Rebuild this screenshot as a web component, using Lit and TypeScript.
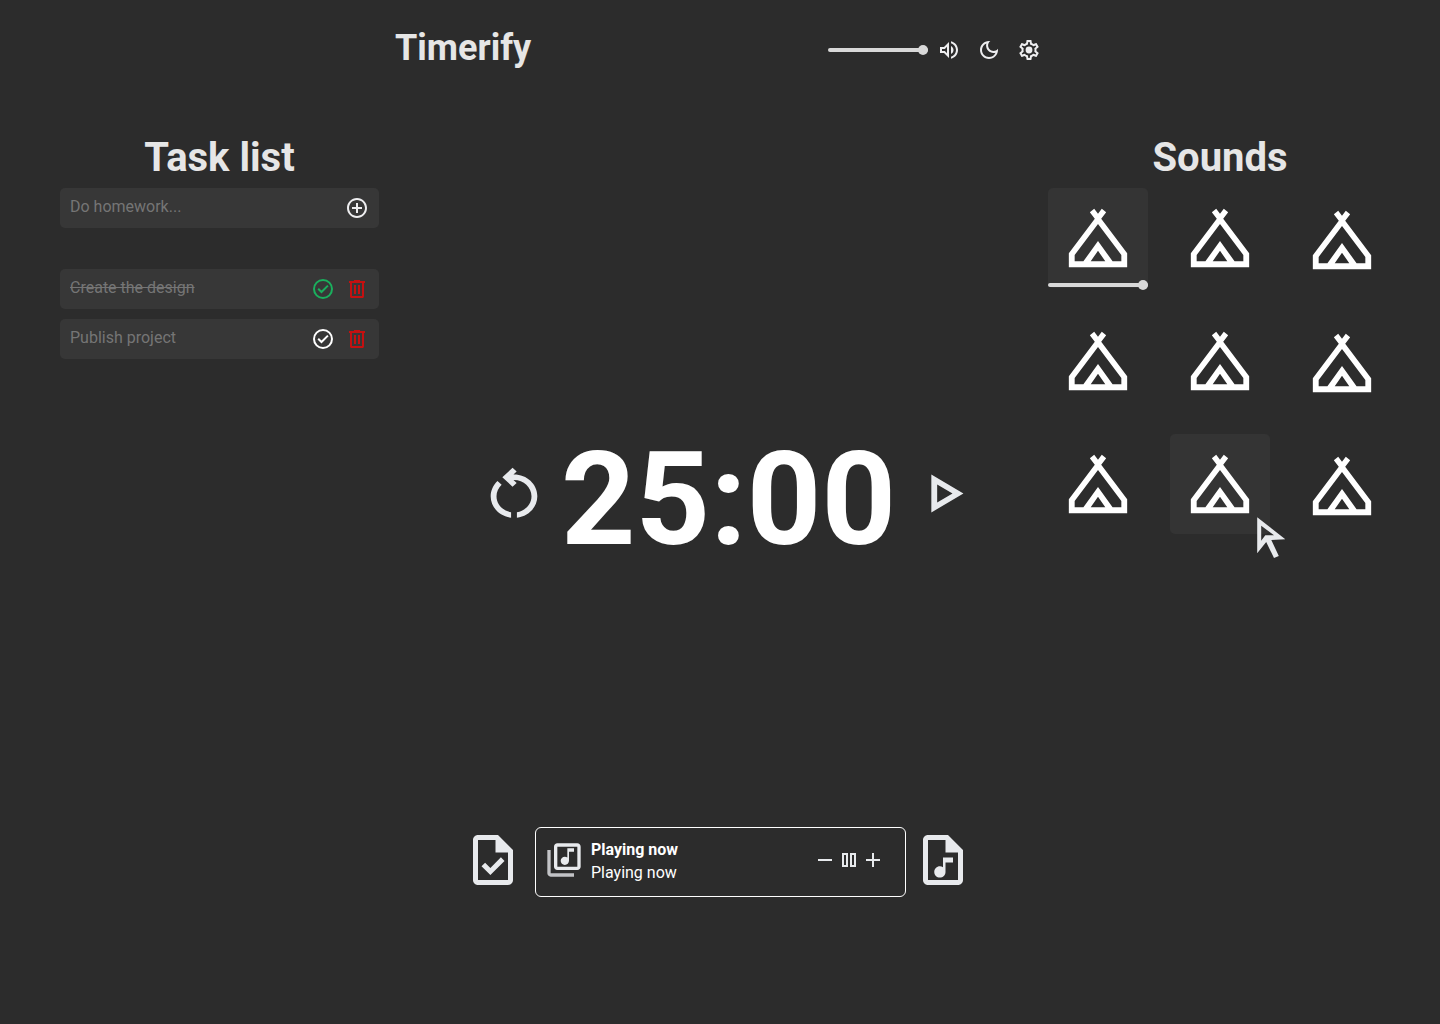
import { LitElement, html, svg, css } from "lit";
import { customElement, property, state } from "lit/decorators.js";
import { classMap } from "lit/directives/class-map.js";

const ICONS = {
  volume: svg`<path d="M3 9v6h4l5 5V4L7 9H3zm7-.17v6.34L7.83 13H5v-2h2.83L10 8.83zM16.5 12c0-1.77-1.02-3.29-2.5-4.03v8.05c1.48-.73 2.5-2.25 2.5-4.02zM14 3.23v2.06c2.89.86 5 3.54 5 6.71s-2.11 5.85-5 6.71v2.06c4.01-.91 7-4.49 7-8.77s-2.99-7.86-7-8.77z"/>`,
  moon: svg`<path d="M9.37 5.51C9.19 6.15 9.1 6.82 9.1 7.5c0 4.08 3.32 7.4 7.4 7.4.68 0 1.35-.09 1.99-.27C17.45 17.19 14.93 19 12 19c-3.86 0-7-3.14-7-7 0-2.93 1.81-5.45 4.37-6.49zM12 3c-4.97 0-9 4.03-9 9s4.03 9 9 9 9-4.03 9-9c0-.46-.04-.92-.1-1.36-.98 1.37-2.58 2.26-4.4 2.26-2.98 0-5.4-2.42-5.4-5.4 0-1.81.89-3.42 2.26-4.4C12.92 3.04 12.46 3 12 3z"/>`,
  settings: svg`<path d="M19.43 12.98c.04-.32.07-.64.07-.98 0-.34-.03-.66-.07-.98l2.11-1.65c.19-.15.24-.42.12-.64l-2-3.46c-.09-.16-.26-.25-.44-.25-.06 0-.12.01-.17.03l-2.49 1c-.52-.4-1.08-.73-1.69-.98l-.38-2.65C14.46 2.18 14.25 2 14 2h-4c-.25 0-.46.18-.49.42l-.38 2.65c-.61.25-1.17.59-1.69.98l-2.49-1c-.06-.02-.12-.03-.18-.03-.17 0-.34.09-.43.25l-2 3.46c-.13.22-.07.49.12.64l2.11 1.65c-.04.32-.07.65-.07.98 0 .33.03.66.07.98l-2.11 1.65c-.19.15-.24.42-.12.64l2 3.46c.09.16.26.25.44.25.06 0 .12-.01.17-.03l2.49-1c.52.4 1.08.73 1.69.98l.38 2.65c.03.24.24.42.49.42h4c.25 0 .46-.18.49-.42l.38-2.65c.61-.25 1.17-.59 1.69-.98l2.49 1c.06.02.12.03.18.03.17 0 .34-.09.43-.25l2-3.46c.12-.22.07-.49-.12-.64l-2.11-1.65zm-1.98-1.71c.04.31.05.52.05.73 0 .21-.02.43-.05.73l-.14 1.13.89.7 1.08.84-.7 1.21-1.27-.51-1.04-.42-.9.68c-.43.32-.84.56-1.25.73l-1.06.43-.16 1.13-.2 1.35h-1.4l-.19-1.35-.16-1.13-1.06-.43c-.43-.18-.83-.41-1.23-.71l-.91-.7-1.06.43-1.27.51-.7-1.21 1.08-.84.89-.7-.14-1.13c-.03-.31-.05-.54-.05-.74s.02-.43.05-.73l.14-1.13-.89-.7-1.08-.84.7-1.21 1.27.51 1.04.42.9-.68c.43-.32.84-.56 1.25-.73l1.06-.43.16-1.13.2-1.35h1.39l.19 1.35.16 1.13 1.06.43c.43.18.83.41 1.23.71l.91.7 1.06-.43 1.27-.51.7 1.21-1.07.85-.89.7.14 1.13z"/><circle cx="12" cy="12" r="3.4"/>`,
  addCircle: svg`<path d="M13 7h-2v4H7v2h4v4h2v-4h4v-2h-4V7zm-1-5C6.48 2 2 6.48 2 12s4.48 10 10 10 10-4.48 10-10S17.52 2 12 2zm0 18c-4.41 0-8-3.59-8-8s3.59-8 8-8 8 3.59 8 8-3.59 8-8 8z"/>`,
  checkCircle: svg`<g fill="none" stroke="currentColor" stroke-width="2"><circle cx="12" cy="12" r="9"/><path d="M7.2 11.8l3.3 3.2 6.4-6.4"/></g>`,
  trash: svg`<path fill-rule="evenodd" d="M9 3h6v1h5v2h-1v13.500c0 .8-.7 1.500-1.500 1.500h-11C5.700 21 5 20.300 5 19.500V6H4V4h5V3zM7 6v13h10V6H7zm2 2h2v9H9V8zm4 0h2v9h-2V8z"/>`,
  tent: svg`<path fill-rule="evenodd" d="M2 22v-4.800L10.900 5.400 9.200 3.200l1.500-1.200L12 3.700l1.300-1.700 1.500 1.200-1.700 2.200L22 17.200V22H2zM4 20h3l5-7 5 7h3v-2.200L12 7.200 4 17.800V20zm5.500 0h5L12 16.350 9.500 20z"/>`,
  restart: svg`<path d="M6 13c0-1.650.67-3.150 1.760-4.240L6.340 7.340C4.900 8.790 4 10.790 4 13c0 4.080 3.050 7.440 7 7.930v-2.020c-2.830-.48-5-2.940-5-5.910zm14 0c0-4.420-3.580-8-8-8-.06 0-.12.01-.18.01l1.090-1.090L11.500 2.500 8 6l3.500 3.500 1.410-1.410-1.080-1.080c.06 0 .12-.01.17-.01 3.310 0 6 2.690 6 6 0 2.970-2.170 5.430-5 5.910v2.020c3.950-.49 7-3.850 7-7.930z"/>`,
  play: svg`<path d="M10 8.640L15.270 12 10 15.360V8.640M8 5v14l11-7L8 5z"/>`,
  taskFile: svg`<path fill-rule="evenodd" d="M6 2h8l6 6v12c0 1.100-.9 2-2 2H6c-1.100 0-2-.9-2-2V4c0-1.100.9-2 2-2zm0 2v16h12V9h-5V4H6z"/><path d="M10.950 18l5.650-5.650-1.430-1.430-4.220 4.230-2.100-2.100-1.450 1.420L10.950 18z"/>`,
  audioFile: svg`<path fill-rule="evenodd" d="M6 2h8l6 6v12c0 1.100-.9 2-2 2H6c-1.100 0-2-.9-2-2V4c0-1.100.9-2 2-2zm0 2v16h12V9h-5V4H6z"/><path d="M16 11h-4v3.880c-.36-.24-.79-.38-1.250-.38-1.240 0-2.250 1.010-2.250 2.250S9.510 19 10.750 19 13 17.990 13 16.750V13h3v-2z"/>`,
  library: svg`<path d="M20 2H8c-1.100 0-2 .9-2 2v12c0 1.100.9 2 2 2h12c1.100 0 2-.9 2-2V4c0-1.100-.9-2-2-2zm0 14H8V4h12v12zm-7.500-1c1.380 0 2.500-1.120 2.500-2.500V7h3V5h-4v5.510c-.42-.32-.93-.51-1.500-.51-1.380 0-2.500 1.120-2.500 2.500s1.120 2.500 2.500 2.500z"/><path opacity=".8" d="M4 6H2v14c0 1.100.9 2 2 2h14v-2H4V6z"/>`,
  minus: svg`<path d="M5 11h14v2H5z"/>`,
  pause: svg`<path fill-rule="evenodd" d="M5 5h6v14H5V5zm2 2v10h2V7H7zm6-2h6v14h-6V5zm2 2v10h2V7h-2z"/>`,
  plus: svg`<path d="M11 5h2v6h6v2h-6v6h-2v-6H5v-2h6V5z"/>`,
};

const icon = (name: keyof typeof ICONS) =>
  html`<svg viewBox="0 0 24 24" preserveAspectRatio="none" fill="currentColor" aria-hidden="true">${ICONS[name]}</svg>`;

const base = css`
  *,
  *::before,
  *::after {
    box-sizing: border-box;
  }
  button {
    display: grid;
    place-items: center;
    margin: 0;
    padding: 0;
    border: 0;
    background: none;
    color: inherit;
    font: inherit;
    cursor: pointer;
  }
  svg {
    display: block;
    width: 24px;
    height: 24px;
  }
  h1,
  h2,
  p,
  ul {
    margin: 0;
    padding: 0;
    list-style: none;
  }
`;

@customElement("volume-slider")
class VolumeSlider extends LitElement {
  @property() label = "";

  static styles = [
    base,
    css`
      :host {
        display: block;
        width: 100px;
      }
      .range {
        display: block;
        appearance: none;
        width: 100%;
        height: 10px;
        margin: 0;
        background: none;
      }
      .range::-webkit-slider-runnable-track {
        height: 4px;
        border-radius: 2px;
        background: #d9d9d9;
      }
      .range::-webkit-slider-thumb {
        appearance: none;
        width: 10px;
        height: 10px;
        margin-top: -3px;
        border-radius: 50%;
        background: #d9d9d9;
      }
    `,
  ];

  render() {
    return html`<input class="range" type="range" min="0" max="100" value="100" aria-label=${this.label} />`;
  }
}

interface Task {
  title: string;
  done: boolean;
}

@customElement("task-list")
class TaskList extends LitElement {
  @state() tasks: Task[] = [
    { title: "Create the design", done: true },
    { title: "Publish project", done: false },
  ];

  static styles = [
    base,
    css`
      :host {
        display: block;
      }
      .heading {
        font-size: 40px;
        line-height: 52px;
        text-align: center;
        color: #e6e6e6;
      }
      .row {
        display: flex;
        align-items: center;
        gap: 10px;
        height: 40px;
        padding: 0 10px;
        border-radius: 5px;
        background: #373737;
      }
      .new {
        margin: 4px 0 41px;
        color: #eeeef0;
      }
      .text {
        flex: 1;
        min-width: 0;
        padding: 0 0 2px;
        border: 0;
        outline: 0;
        background: none;
        color: #757575;
        font: inherit;
        font-size: 16px;
        line-height: 24px;
      }
      .text::placeholder {
        color: #757575;
        opacity: 1;
      }
      .done {
        text-decoration: line-through;
      }
      .items {
        display: grid;
        gap: 10px;
      }
      .check {
        color: #ffffff;
      }
      .checked {
        color: #1aaf5d;
      }
      .remove {
        color: #c41010;
      }
    `,
  ];

  private add(event: Event) {
    event.preventDefault();
    const input = this.renderRoot.querySelector("input")!;
    const title = input.value.trim();
    if (!title) return;
    this.tasks = [...this.tasks, { title, done: false }];
    input.value = "";
  }

  private toggle(task: Task) {
    this.tasks = this.tasks.map((t) => (t === task ? { ...t, done: !t.done } : t));
  }

  private remove(task: Task) {
    this.tasks = this.tasks.filter((t) => t !== task);
  }

  render() {
    return html`
      <h2 class="heading">Task list</h2>
      <form class="row new" @submit=${this.add}>
        <input class="text" type="text" placeholder="Do homework..." aria-label="New task" />
        <button type="submit" aria-label="Add task">${icon("addCircle")}</button>
      </form>
      <ul class="items">
        ${this.tasks.map(
          (task) => html`
            <li class="row">
              <span class=${classMap({ text: true, done: task.done })}>${task.title}</span>
              <button
                class=${classMap({ check: true, checked: task.done })}
                aria-label="Complete task"
                aria-pressed=${task.done}
                @click=${() => this.toggle(task)}
              >
                ${icon("checkCircle")}
              </button>
              <button class="remove" aria-label="Delete task" @click=${() => this.remove(task)}>${icon("trash")}</button>
            </li>
          `
        )}
      </ul>
    `;
  }
}

@customElement("sound-board")
class SoundBoard extends LitElement {
  @state() playing = 0;
  @state() hovered = 7;

  static styles = [
    base,
    css`
      :host {
        display: block;
      }
      .heading {
        margin-bottom: 4px;
        font-size: 40px;
        line-height: 52px;
        text-align: center;
        color: #e6e6e6;
      }
      .grid {
        display: grid;
        grid-template-columns: repeat(3, 100px);
        justify-content: space-between;
        row-gap: 23px;
      }
      .cell {
        position: relative;
        height: 100px;
        border-radius: 5px;
      }
      .active {
        background: #343434;
      }
      .sound {
        width: 100%;
        height: 100%;
        color: #ffffff;
      }
      .cell:nth-child(3n) .sound {
        padding-top: 4px;
      }
      .sound svg {
        width: 70px;
        height: 70px;
      }
      .level {
        position: absolute;
        left: 0;
        bottom: -2px;
      }
      .pointer {
        position: absolute;
        left: 87px;
        top: 83px;
        width: 29px;
        height: 42px;
        pointer-events: none;
      }
    `,
  ];

  render() {
    return html`
      <h2 class="heading">Sounds</h2>
      <ul class="grid">
        ${Array.from(
          { length: 9 },
          (_, i) => html`
            <li class=${classMap({ cell: true, active: i === this.playing || i === this.hovered })}>
              <button class="sound" aria-label="Camping sound ${i + 1}" @click=${() => (this.playing = i)}>
                ${icon("tent")}
              </button>
              ${i === this.playing
                ? html`<volume-slider class="level" label="Sound volume"></volume-slider>`
                : ""}
              ${i === this.hovered
                ? html`<svg class="pointer" viewBox="0 0 29 42" aria-hidden="true">
                    <path
                      fill="#e8eaed"
                      fill-rule="evenodd"
                      d="M.2.200L28.300 22.300 14.300 23l7.500 15.900-4.800 2.100L9.200 25 .2 36.300zM4.200 8.700V23.800L8.300 18.300H17z"
                    />
                  </svg>`
                : ""}
            </li>
          `
        )}
      </ul>
    `;
  }
}

@customElement("app-root")
class AppRoot extends LitElement {
  static styles = [
    base,
    css`
      :host {
        display: flex;
        flex-direction: column;
        min-height: 100vh;
        padding-bottom: 127px;
        box-sizing: border-box;
        background: #2c2c2c;
        color: #ffffff;
        font-family: Roboto, "Noto Sans", sans-serif;
      }
      .header {
        display: flex;
        align-items: center;
        justify-content: space-between;
        width: 100%;
        max-width: 650px;
        height: 100px;
        margin: 0 auto;
        padding-right: 4px;
      }
      .brand {
        padding-bottom: 4px;
        font-size: 36px;
        line-height: 48px;
        color: #e6e6e6;
      }
      .tools {
        display: flex;
        align-items: center;
        gap: 16px;
        color: #eeeef0;
      }
      .volume {
        display: flex;
        align-items: center;
        gap: 9px;
      }
      .main {
        flex: 1;
        display: grid;
        grid-template-columns: 319px 1fr 344px;
        padding: 32px 48px 0 60px;
      }
      .timer {
        display: flex;
        align-items: center;
        justify-content: center;
        gap: 12px;
        padding: 28px 0 0 30px;
        color: #e8eaed;
      }
      .clock {
        padding-top: 12px;
        font-size: 130px;
        line-height: 140px;
        font-weight: 700;
        color: #ffffff;
      }
      .timer svg {
        width: 70px;
        height: 65px;
      }
      .footer {
        display: flex;
        align-items: center;
        justify-content: center;
        gap: 7px;
        padding-right: 4px;
        color: #e8eaed;
      }
      .file {
        padding-bottom: 4px;
      }
      .file svg {
        width: 60px;
        height: 60px;
      }
      .player {
        display: flex;
        align-items: center;
        width: 371px;
        height: 70px;
        margin-left: 5px;
        padding: 0 20px 4px 8px;
        border: 1px solid #ffffff;
        border-radius: 6px;
      }
      .cover svg {
        width: 40px;
        height: 40px;
      }
      .track {
        flex: 1;
        padding: 2px 0 0 7px;
        font-size: 16px;
        line-height: 23px;
        color: #ffffff;
      }
      .title {
        font-weight: 700;
      }
      .controls {
        display: flex;
      }
    `,
  ];

  render() {
    return html`
      <header class="header">
        <h1 class="brand">Timerify</h1>
        <div class="tools">
          <div class="volume">
            <volume-slider label="Volume"></volume-slider>
            <button aria-label="Mute">${icon("volume")}</button>
          </div>
          <button aria-label="Dark mode">${icon("moon")}</button>
          <button aria-label="Settings">${icon("settings")}</button>
        </div>
      </header>
      <main class="main">
        <task-list></task-list>
        <section class="timer" aria-label="Timer">
          <button aria-label="Restart timer">${icon("restart")}</button>
          <p class="clock">25:00</p>
          <button aria-label="Start timer">${icon("play")}</button>
        </section>
        <sound-board></sound-board>
      </main>
      <footer class="footer">
        <button class="file" aria-label="Tasks">${icon("taskFile")}</button>
        <section class="player" aria-label="Music player">
          <div class="cover">${icon("library")}</div>
          <div class="track">
            <p class="title">Playing now</p>
            <p>Playing now</p>
          </div>
          <div class="controls">
            <button aria-label="Decrease">${icon("minus")}</button>
            <button aria-label="Pause">${icon("pause")}</button>
            <button aria-label="Increase">${icon("plus")}</button>
          </div>
        </section>
        <button class="file" aria-label="Sounds">${icon("audioFile")}</button>
      </footer>
    `;
  }
}
